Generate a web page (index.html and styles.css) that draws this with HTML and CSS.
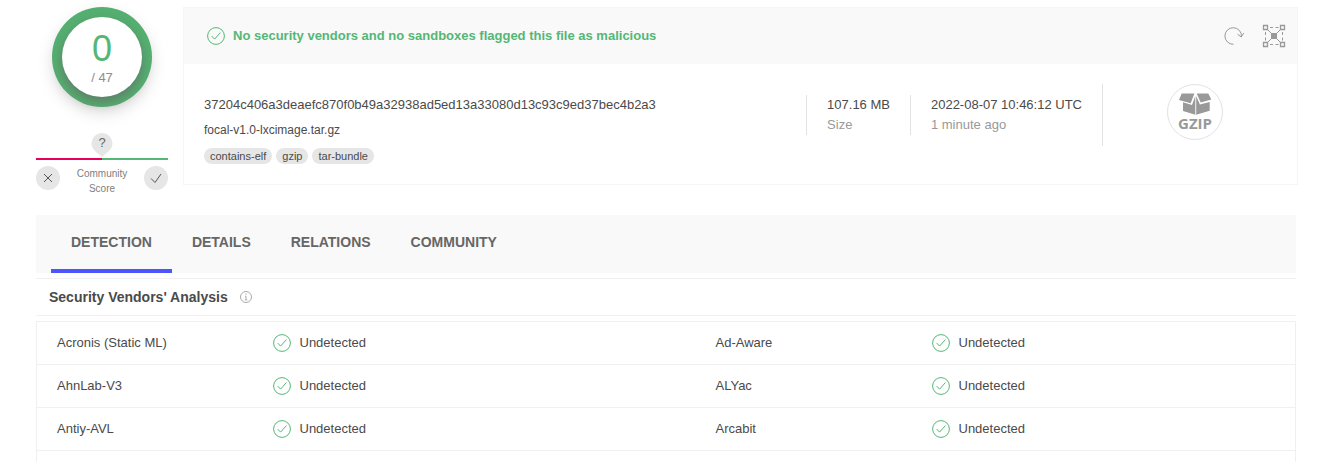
FILE: index.html
```html
<!DOCTYPE html>
<html lang="en">
<head>
<meta charset="utf-8">
<title>File report</title>
<link rel="stylesheet" href="styles.css">
</head>
<body>
<svg class="sprite" aria-hidden="true">
  <symbol id="check" viewBox="0 0 18 18"><circle cx="9" cy="9" r="8.4"/><path d="M4.7 9.1l2.9 3 5.8-6.5"/></symbol>
</svg>
<main class="page">
  <section class="summary">
    <aside class="score">
      <div class="ring"><div class="disc"><span class="positives">0</span><span class="total">/ 47</span></div></div>
      <div class="community">
        <div class="marker">
          <svg class="pin" viewBox="0 0 22 25" aria-hidden="true"><path d="M11 0a10.5 10.5 0 0 1 10.500 10.500C21.500 17 15 20 11 24 7 20 .5 17 .5 10.500A10.500 10.500 0 0 1 11 0z"/></svg>
          <span class="mark">?</span>
        </div>
        <div class="bar"></div>
        <div class="votes">
          <button class="vote" type="button" aria-label="Vote malicious"><svg viewBox="0 0 24 24"><path d="M8 8l8 8M16 8l-8 8"/></svg></button>
          <span class="caption">Community<br>Score</span>
          <button class="vote" type="button" aria-label="Vote harmless"><svg viewBox="0 0 24 24"><path d="M7 12.500l4 4 6-8.500"/></svg></button>
        </div>
      </div>
    </aside>
    <article class="card">
      <header class="verdict">
        <svg class="check" aria-hidden="true"><use href="#check"/></svg>
        <p class="verdict-text">No security vendors and no sandboxes flagged this file as malicious</p>
        <button class="tool" type="button" aria-label="Reanalyze"><svg viewBox="0 0 24 24"><path d="M11.500 20.300A8.300 8.300 0 1 1 19.500 12.500M15.600 10.200l3.600 2.800 2.600-4"/></svg></button>
        <button class="tool" type="button" aria-label="Open graph"><svg viewBox="0 0 24 24"><path class="node" d="M1.500 1.500h4v4h-4zM18.500 1.500h4v4h-4zM1.500 18.500h4v4h-4zM18.500 18.500h4v4h-4z"/><path d="M8 3.500h3M13.500 3.500h3M8 20.500h3M13.500 20.500h3M3.500 8v3M3.500 13.500v3M20.500 8v3M20.500 13.500v3M6 6l12 12M18 6L6 18"/><path class="solid" d="M9.500 9.500h5v5h-5z"/></svg></button>
      </header>
      <div class="details">
        <div class="identity">
          <div class="hash">37204c406a3deaefc870f0b49a32938ad5ed13a33080d13c93c9ed37bec4b2a3</div>
          <div class="filename">focal-v1.0-lxcimage.tar.gz</div>
          <div class="tags"><a class="tag" href="#">contains-elf</a><a class="tag" href="#">gzip</a><a class="tag" href="#">tar-bundle</a></div>
        </div>
        <div class="fact"><div>107.16 MB</div><div class="muted">Size</div></div>
        <div class="fact"><div>2022-08-07 10:46:12 UTC</div><div class="muted">1 minute ago</div></div>
        <div class="filetype">
          <div class="badge">
            <svg class="box" viewBox="0 0 34 23" aria-hidden="true"><path d="M3.700.4H16.400L12.700 10.300 1 7zM5 9.300l9 2.700L17.300 3V21.800L5 17.900zM18.200 3l3.700 8.500 9.800-2.500V17.800L18.200 21.800zM18.700.4H30.300L33.300 6.500 22.700 9.500z"/></svg>
            <span class="badge-text">GZIP</span>
          </div>
        </div>
      </div>
    </article>
  </section>
  <nav class="tabs">
    <a class="tab active" href="#">DETECTION</a>
    <a class="tab" href="#">DETAILS</a>
    <a class="tab" href="#">RELATIONS</a>
    <a class="tab" href="#">COMMUNITY</a>
  </nav>
  <section class="analysis">
    <div class="heading">
      <h2 class="title">Security Vendors' Analysis</h2>
      <svg class="info" viewBox="0 0 12 12" aria-hidden="true"><circle cx="6" cy="6" r="5.500"/><path d="M6 2.500v1.200M5 5.200h1v3.500M4.800 8.900h2.500"/></svg>
    </div>
    <table class="vendors">
      <colgroup><col class="col-name"><col class="col-wide"><col class="col-name"><col></colgroup>
      <tbody>
        <tr><th scope="row">Acronis (Static ML)</th><td><span class="result"><svg class="check" aria-hidden="true"><use href="#check"/></svg>Undetected</span></td><th scope="row">Ad-Aware</th><td><span class="result"><svg class="check" aria-hidden="true"><use href="#check"/></svg>Undetected</span></td></tr>
        <tr><th scope="row">AhnLab-V3</th><td><span class="result"><svg class="check" aria-hidden="true"><use href="#check"/></svg>Undetected</span></td><th scope="row">ALYac</th><td><span class="result"><svg class="check" aria-hidden="true"><use href="#check"/></svg>Undetected</span></td></tr>
        <tr><th scope="row">Antiy-AVL</th><td><span class="result"><svg class="check" aria-hidden="true"><use href="#check"/></svg>Undetected</span></td><th scope="row">Arcabit</th><td><span class="result"><svg class="check" aria-hidden="true"><use href="#check"/></svg>Undetected</span></td></tr>
        <tr class="tail"><td colspan="4"></td></tr>
      </tbody>
    </table>
  </section>
</main>
</body>
</html>
```

FILE: styles.css
```css
* { box-sizing: border-box; }
body { margin: 0; background: #fff; color: #4a4a4a; font: 13px/20px "Liberation Sans", Arial, sans-serif; }
a { color: inherit; text-decoration: none; }
button { padding: 0; border: 0; background: none; cursor: pointer; }
svg { display: block; flex: none; fill: none; stroke: currentColor; }
.sprite { position: absolute; width: 0; height: 0; }
.page { padding: 7px 25px 0 36px; }

.summary { display: flex; align-items: flex-start; gap: 15px; margin-right: -2px; }
.score { width: 132px; flex: none; display: flex; flex-direction: column; align-items: center; }
.ring { width: 100px; height: 100px; padding: 10px; border-radius: 50%; background: #54b070; box-shadow: 0 6px 16px rgba(0, 0, 0, .13); }
.disc { height: 80px; border-radius: 50%; background: #fff; box-shadow: 0 5px 12px rgba(100, 100, 100, .7); display: flex; flex-direction: column; align-items: center; }
.positives { margin-top: 11px; font-size: 36px; line-height: 42px; color: #55b776; }
.total { line-height: 15px; color: #8e8e8e; }
.community { width: 100%; margin-top: 26px; }
.marker { display: grid; width: 22px; height: 25px; margin: 0 auto; }
.pin { grid-area: 1 / 1; width: 22px; height: 25px; fill: #e6e6e6; stroke: none; }
.mark { grid-area: 1 / 1; text-align: center; color: #666; }
.bar { height: 2px; background: linear-gradient(to right, #e6005a 50%, #54b776 50%); }
.votes { display: flex; justify-content: space-between; margin-top: 6px; }
.vote { width: 24px; height: 24px; border-radius: 50%; background: #e6e6e6; color: #555; }
.caption { font-size: 10px; line-height: 15px; text-align: center; color: #808080; }

.card { flex: 1; border: 1px solid #f5f5f5; }
.verdict { height: 56px; display: flex; align-items: center; padding: 0 11px 0 23px; background: #f9f9f9; }
.check { width: 18px; height: 18px; color: #54b776; }
.verdict-text { flex: 1; margin: 0 0 0 8px; font-weight: bold; color: #54b776; }
.tool { width: 24px; height: 24px; margin-left: 16px; color: #999; }
.node { stroke-width: 1.3; }
.solid { fill: currentColor; }
.details { display: flex; align-items: flex-start; padding: 20px; }
.identity { flex: 1; padding-top: 11px; }
.filename { margin-top: 5px; font-size: 12px; }
.tags { display: flex; gap: 4px; margin-top: 8px; }
.tag { padding: 0 6px; border-radius: 8px; background: #e6e6e6; font-size: 11px; line-height: 16px; }
.fact { margin-top: 11px; padding: 0 20px; border-left: 1px solid #e2e2e2; }
.muted { color: #999; }
.filetype { height: 62px; width: 175px; padding-left: 64px; border-left: 1px solid #e2e2e2; }
.badge { width: 56px; height: 56px; border: 1px solid #e2e2e2; border-radius: 50%; display: flex; flex-direction: column; align-items: center; color: #999; }
.box { width: 34px; height: 23px; margin-top: 8px; fill: currentColor; stroke: none; }
.badge-text { font: bold 15px/15px "Open Sans", sans-serif; }

.tabs { display: flex; height: 58px; margin-top: 19px; padding: 0 15px; background: #f9f9f9; }
.tab { padding: 17px 20px 0; font-size: 14px; font-weight: bold; color: #666; border-bottom: 4px solid transparent; }
.active { border-color: #4d55ff; }
.heading { display: flex; align-items: center; gap: 12px; height: 38px; margin: 5px 0; padding-left: 13px; border: solid #f0f0f0; border-width: 1px 0; }
.title { margin: 0; font-size: 14px; line-height: 20px; }
.info { width: 12px; height: 12px; color: #aaa; }
.vendors { width: 100%; table-layout: fixed; border-collapse: collapse; border: 1px solid #f0f0f0; border-bottom: 0; }
.col-name { width: 236px; }
.col-wide { width: 423px; }
.vendors tr { height: 43px; border-bottom: 1px solid #f0f0f0; }
.vendors .tail { height: 11px; border-bottom: 0; }
.vendors th, .vendors td { padding: 0; text-align: left; font-weight: normal; }
.vendors th { padding-left: 20px; }
.result { display: flex; align-items: center; gap: 9px; }
```
